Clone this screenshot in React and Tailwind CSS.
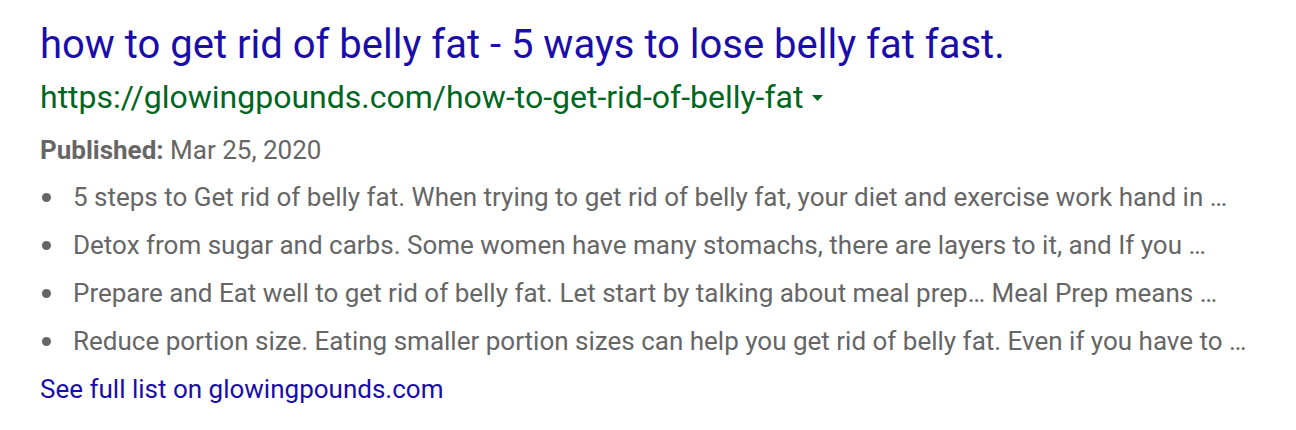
import React from "react";

const bullets = [
  "5 steps to Get rid of belly fat. When trying to get rid of belly fat, your diet and exercise work hand in …",
  "Detox from sugar and carbs. Some women have many stomachs, there are layers to it, and If you …",
  "Prepare and Eat well to get rid of belly fat. Let start by talking about meal prep… Meal Prep means …",
  "Reduce portion size. Eating smaller portion sizes can help you get rid of belly fat. Even if you have to …",
];

const App = () => {
  return (
    <div className="w-[1296px] h-[430px] bg-white px-[40px] pt-[21px] font-['Roboto',sans-serif]">
      {/* Title */}
      <a className="block text-[40px] leading-[48px] text-[#1a0dab]">
        how to get rid of belly fat - 5 ways to lose belly fat fast.
      </a>

      {/* URL line */}
      <div className="mt-[8px] flex items-center text-[32px] leading-[40px] text-[#006621]">
        <span>https://glowingpounds.com/how-to-get-rid-of-belly-fat</span>
        <svg className="ml-[9px] mt-[2px]" width="11" height="6" viewBox="0 0 11 6">
          <path d="M0 0 L11 0 L5.5 6 Z" fill="#006621" />
        </svg>
      </div>

      {/* Published */}
      <div className="mt-[17px] text-[26px] leading-[32px] text-[#666]">
        <span className="font-bold">Published:</span> Mar 25, 2020
      </div>

      {/* List */}
      <ul className="mt-[7px] text-[26px] text-[#666]">
        {bullets.map((b, i) => (
          <li key={i} className="flex items-center h-[48px]">
            <span className="w-[33px] flex justify-start pl-[2px]">
              <span className="w-[9px] h-[9px] rounded-full bg-[#666]" />
            </span>
            <span>{b}</span>
          </li>
        ))}
      </ul>

      <a className="block mt-[8px] text-[26px] leading-[32px] text-[#1a0dab]">
        See full list on glowingpounds.com
      </a>
    </div>
  );
};

export default App;
